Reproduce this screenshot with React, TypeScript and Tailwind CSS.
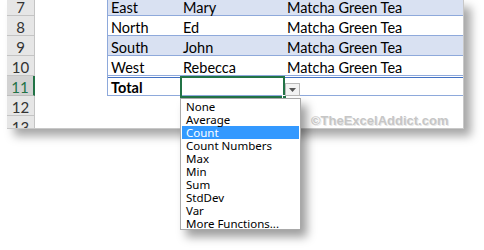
import React from "react";

const rows = [
  { n: 7, a: "East", b: "Mary", c: "Matcha Green Tea", band: true },
  { n: 8, a: "North", b: "Ed", c: "Matcha Green Tea", band: false },
  { n: 9, a: "South", b: "John", c: "Matcha Green Tea", band: true },
  { n: 10, a: "West", b: "Rebecca", c: "Matcha Green Tea", band: false },
];

const items = [
  "None",
  "Average",
  "Count",
  "Count Numbers",
  "Max",
  "Min",
  "Sum",
  "StdDev",
  "Var",
  "More Functions...",
];

function RowHeader({ n, selected }: { n: number; selected?: boolean }) {
  return (
    <div
      className={
        selected
          ? "w-[28px] shrink-0 h-full flex items-end justify-center bg-[#d2d2d2] border-b border-[#bdbdbd] border-r-2 border-r-[#217346] text-[#217346] leading-none"
          : "w-[28px] shrink-0 h-full flex items-end justify-center bg-[#e6e6e6] border-b border-r border-[#c4c4c4] text-[#333] leading-none"
      }
    >
      <span className="text-[15px]">{n}</span>
    </div>
  );
}

export default function App() {
  return (
    <div className="relative w-[484px] h-[250px] bg-white overflow-hidden">
      <div
        className="relative ml-[7px] w-[457px] h-[129px] bg-white border-r border-b border-[#c8c8c8] overflow-hidden shadow-[7px_7px_9px_rgba(0,0,0,0.35)]"
        style={{ fontFamily: "Lato, 'Liberation Sans', sans-serif" }}
      >
        <div className="-mt-[4px] flex flex-col text-[14.5px]">
          {rows.map((r) => (
            <div key={r.n} className="flex h-[20px]">
              <RowHeader n={r.n} />
              <div className="w-[72px] shrink-0" />
              <div
                className={
                  "flex flex-1 items-end border-l border-b border-[#8ea9db] text-black leading-none " +
                  (r.band ? "bg-[#d9e1f2]" : "bg-white")
                }
              >
                <div className="w-[72px] pl-[3px]">{r.a}</div>
                <div className="w-[105px] pl-[3px]">{r.b}</div>
                <div className="flex-1 pl-[2px]">{r.c}</div>
              </div>
            </div>
          ))}
          <div className="flex h-[20px]">
            <RowHeader n={11} selected />
            <div className="w-[72px] shrink-0" />
            <div className="flex flex-1 items-end border-l border-b border-[#8ea9db] shadow-[inset_0_1px_0_#fff,inset_0_2px_0_#4472c4] leading-none">
              <div className="w-[72px] pl-[3px] font-bold">Total</div>
              <div className="w-[105px]" />
              <div className="flex-1" />
            </div>
          </div>
          <div className="flex h-[20px]">
            <RowHeader n={12} />
            <div className="flex-1" />
          </div>
          <div className="flex h-[20px]">
            <RowHeader n={13} />
            <div className="flex-1" />
          </div>
        </div>

        <div
          className="absolute left-[304px] top-[114px] text-[13px] font-bold text-[#c6c6c6] leading-none [text-shadow:1px_1px_0_#e8e8e8]"
          style={{ fontFamily: "'Liberation Sans', Arial, sans-serif" }}
        >
          ©TheExcelAddict.com
        </div>
      </div>

      {/* selected cell */}
      <div className="absolute left-[180px] top-[76px] w-[105px] h-[22px] border-2 border-[#217346]" />
      <div className="absolute left-[282px] top-[95px] w-[5px] h-[5px] bg-[#217346] border border-white" />

      {/* dropdown button */}
      <div className="absolute left-[285px] top-[83px] w-[15px] h-[13px] bg-[#f3f3f3] border border-[#b9b9b9] flex items-center justify-center">
        <svg width="7" height="4" viewBox="0 0 7 4">
          <path d="M0 0 H7 L3.5 4 Z" fill="#555" />
        </svg>
      </div>

      {/* dropdown list */}
      <div
        className="absolute left-[180px] top-[98px] w-[121px] h-[132px] bg-white border border-[#a9a9a9] pt-[1px] px-[1px] shadow-[6px_7px_9px_rgba(0,0,0,0.38)]"
        style={{ fontFamily: "'Noto Sans', 'Open Sans', sans-serif" }}
      >
        {items.map((it) => (
          <div
            key={it}
            className={
              "h-[13px] pl-[4px] text-[11.5px] leading-[13px] whitespace-nowrap " +
              (it === "Count" ? "bg-[#3399ff] text-white" : "text-black")
            }
          >
            {it}
          </div>
        ))}
      </div>
    </div>
  );
}
